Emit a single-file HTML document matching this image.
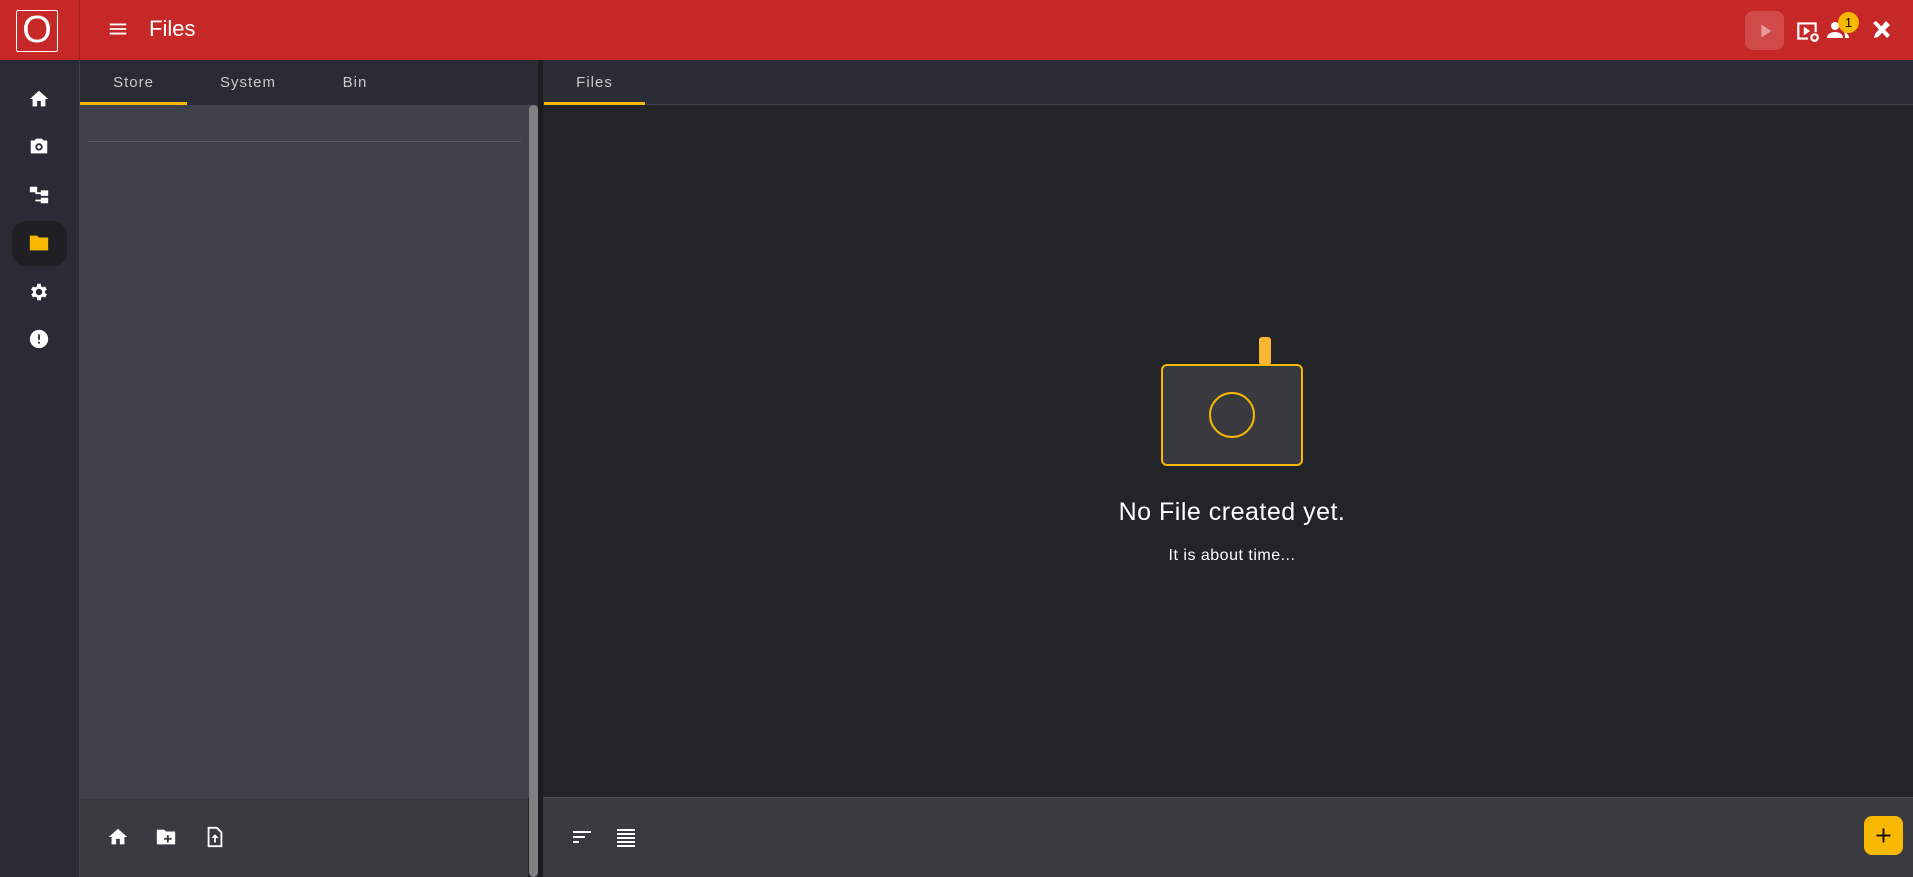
<!DOCTYPE html>
<html><head><meta charset="utf-8"><style>
*{margin:0;padding:0;box-sizing:border-box}
body{width:1913px;height:877px;overflow:hidden;background:#232428;font-family:"Liberation Sans",sans-serif;position:relative}
.a{position:absolute}
svg{display:block}
</style></head><body>
<div class="a" style="left:0;top:0;width:1913px;height:60px;background:#c62828"></div>
<div class="a" style="left:79px;top:0;width:1px;height:60px;background:#9e1f1f"></div>
<div class="a" style="left:16px;top:10px;width:42px;height:42px;border:1.5px solid #fff;border-radius:2px;color:#fff;font-size:38px;line-height:39px;text-align:center;font-weight:300">O</div>
<svg class="a" style="left:107px;top:18px" width="22" height="22" viewBox="0 0 24 24"><path fill="#fff" d="M3 6h18v2H3zm0 5h18v2H3zm0 5h18v2H3z"/></svg>
<div class="a" style="left:149px;top:16px;color:#fff;font-size:22px">Files</div>
<div class="a" style="left:1745px;top:11px;width:39px;height:39px;border-radius:8px;background:#d04a4a"></div>
<svg class="a" style="left:1754px;top:20px" width="22" height="22" viewBox="0 0 24 24"><path fill="#e89a9a" d="M8 5v14l11-7z"/></svg>
<svg class="a" style="left:1794px;top:18px" width="26" height="26" viewBox="0 0 24 24"><path fill="#fff" d="M3 4h18v9h-2V6H5v12h8v2H3zM9 8l6 4-6 4z"/><circle cx="19" cy="18" r="3" fill="none" stroke="#fff" stroke-width="2"/></svg>
<svg class="a" style="left:1826px;top:18px" width="24" height="24" viewBox="0 0 24 24"><circle cx="9" cy="8" r="4" fill="#fff"/><path fill="#fff" d="M1 20c0-4 4-6 8-6s8 2 8 6z"/><path fill="#fff" d="M16 12a4 4 0 0 0 0-8v8zm2 2c3 1 5 3 5 6h-4c0-2-0-4-1-6z"/></svg>
<div class="a" style="left:1838px;top:12px;width:21px;height:21px;border-radius:50%;background:#f9b800;color:#000;font-size:13px;text-align:center;line-height:21px">1</div>
<svg class="a" style="left:1869px;top:18px" width="24" height="24" viewBox="0 0 24 24"><path fill="#fff" d="M4 5l3-2 14 14-3 3zM17 3l4 4-12 12-4 1 1-4z"/></svg>

<div class="a" style="left:0;top:60px;width:79px;height:817px;background:#292c34"></div>
<div class="a" style="left:79px;top:60px;width:1px;height:817px;background:#3e414a"></div>
<div class="a" style="left:12px;top:221px;width:55px;height:45px;border-radius:14px;background:#1f2024"></div>
<svg class="a" style="left:28px;top:88px" width="22" height="22" viewBox="0 0 24 24"><path fill="#fff" d="M10 20v-6h4v6h5v-8h3L12 3 2 12h3v8z"/></svg>
<svg class="a" style="left:28px;top:135px" width="22" height="22" viewBox="0 0 24 24"><path fill="#fff" d="M3 6h4l2-2h6l2 2h4v14H3zm9 3a4 4 0 1 0 0 8 4 4 0 0 0 0-8zm0 2a2 2 0 1 1 0 4 2 2 0 0 1 0-4z" fill-rule="evenodd"/></svg>
<svg class="a" style="left:28px;top:184px" width="22" height="22" viewBox="0 0 24 24"><path fill="#fff" d="M2 3h8v6H2zm12 4h8v6h-8zm0 8h8v6h-8zM6 9h2v10h6v-2H8v-6h6V9z"/></svg>
<svg class="a" style="left:28px;top:232px" width="22" height="22" viewBox="0 0 24 24"><path fill="#f9b800" d="M2 4h8l2 2h10v14H2z"/></svg>
<svg class="a" style="left:28px;top:281px" width="22" height="22" viewBox="0 0 24 24"><path fill="#fff" fill-rule="evenodd" d="M19.4 13a7.5 7.5 0 0 0 0-2l2.1-1.6-2-3.5-2.5 1a7 7 0 0 0-1.7-1L15 3h-4l-.4 2.9a7 7 0 0 0-1.7 1l-2.5-1-2 3.5L6.6 11a7.5 7.5 0 0 0 0 2l-2.1 1.6 2 3.5 2.5-1a7 7 0 0 0 1.7 1L11 21h4l.4-2.9a7 7 0 0 0 1.7-1l2.5 1 2-3.5zM13 15.5a3.5 3.5 0 1 1 0-7 3.5 3.5 0 0 1 0 7z" transform="translate(-1 0)"/></svg>
<svg class="a" style="left:28px;top:328px" width="22" height="22" viewBox="0 0 24 24"><path fill="#fff" d="M12 2a10 10 0 1 0 0 20 10 10 0 0 0 0-20zm1 15h-2v-2h2zm0-4h-2V7h2z"/></svg>

<div class="a" style="left:80px;top:60px;width:461px;height:45px;background:#292c34"></div>
<div class="a" style="left:80px;top:102px;width:107px;height:3px;background:#f9b800"></div>
<div class="a" style="left:80px;top:74px;width:107px;text-align:center;color:#c8c8c8;font-size:15px;letter-spacing:1px">Store</div>
<div class="a" style="left:200px;top:74px;width:96px;text-align:center;color:#c8c8c8;font-size:15px;letter-spacing:1px">System</div>
<div class="a" style="left:320px;top:74px;width:70px;text-align:center;color:#c8c8c8;font-size:15px;letter-spacing:1px">Bin</div>
<div class="a" style="left:80px;top:105px;width:461px;height:692px;background:#3f424b"></div>
<div class="a" style="left:88px;top:141px;width:433px;height:1px;background:#575a63"></div>
<div class="a" style="left:80px;top:797px;width:448px;height:80px;background:#3a3b41;border-top:1px solid #484b53"></div>
<div class="a" style="left:529px;top:105px;width:9px;height:772px;border-radius:5px;background:#808080"></div>
<svg class="a" style="left:107px;top:826px" width="22" height="22" viewBox="0 0 24 24"><path fill="#fff" d="M10 20v-6h4v6h5v-8h3L12 3 2 12h3v8z"/></svg>
<svg class="a" style="left:155px;top:826px" width="22" height="22" viewBox="0 0 24 24"><path fill="#fff" d="M2 4h8l2 2h10v14H2z"/><path fill="#3a3b41" d="M13 10h2v3h3v2h-3v3h-2v-3h-3v-2h3z"/></svg>
<svg class="a" style="left:204px;top:826px" width="22" height="22" viewBox="0 0 24 24"><path fill="none" stroke="#fff" stroke-width="2" d="M5 2h9l5 5v15H5z"/><path fill="#fff" d="M12 9l4 4h-3v5h-2v-5H8z"/></svg>

<div class="a" style="left:538px;top:60px;width:5px;height:817px;background:#1c1d20"></div>
<div class="a" style="left:543px;top:60px;width:1370px;height:45px;background:#2a2d35;border-bottom:1px solid #3e414a"></div>
<div class="a" style="left:544px;top:102px;width:101px;height:3px;background:#f9b800"></div>
<div class="a" style="left:544px;top:74px;width:101px;text-align:center;color:#c8c8c8;font-size:15px;letter-spacing:1px">Files</div>

<div class="a" style="left:1259px;top:337px;width:12px;height:28px;border-radius:3px;background:#fbb634"></div>
<div class="a" style="left:1161px;top:364px;width:142px;height:102px;border:2px solid #f9b800;border-radius:6px;background:#393a40"></div>
<div class="a" style="left:1209px;top:392px;width:46px;height:46px;border:2px solid #f9b800;border-radius:50%"></div>
<div class="a" style="left:1032px;top:498px;width:400px;text-align:center;color:#fff;font-size:25px;letter-spacing:.5px">No File created yet.</div>
<div class="a" style="left:1032px;top:547px;width:400px;text-align:center;color:#fff;font-size:16px;letter-spacing:.5px">It is about time...</div>

<div class="a" style="left:543px;top:797px;width:1370px;height:80px;background:#3a3b41;border-top:1px solid #484b53"></div>
<svg class="a" style="left:570px;top:825px" width="24" height="24" viewBox="0 0 24 24"><path fill="#fff" d="M3 6h18v2H3zm0 5h12v2H3zm0 5h6v2H3z"/></svg>
<svg class="a" style="left:614px;top:825px" width="24" height="24" viewBox="0 0 24 24"><path fill="#fff" d="M3 4h18v2H3zm0 4h18v2H3zm0 4h18v2H3zm0 4h18v2H3zm0 4h18v2H3z"/></svg>
<div class="a" style="left:1864px;top:816px;width:39px;height:39px;border-radius:8px;background:#f9b800"></div>
<svg class="a" style="left:1873px;top:825px" width="21" height="21" viewBox="0 0 24 24"><path fill="#000" d="M11 4h2v7h7v2h-7v7h-2v-7H4v-2h7z"/></svg>
</body></html>
